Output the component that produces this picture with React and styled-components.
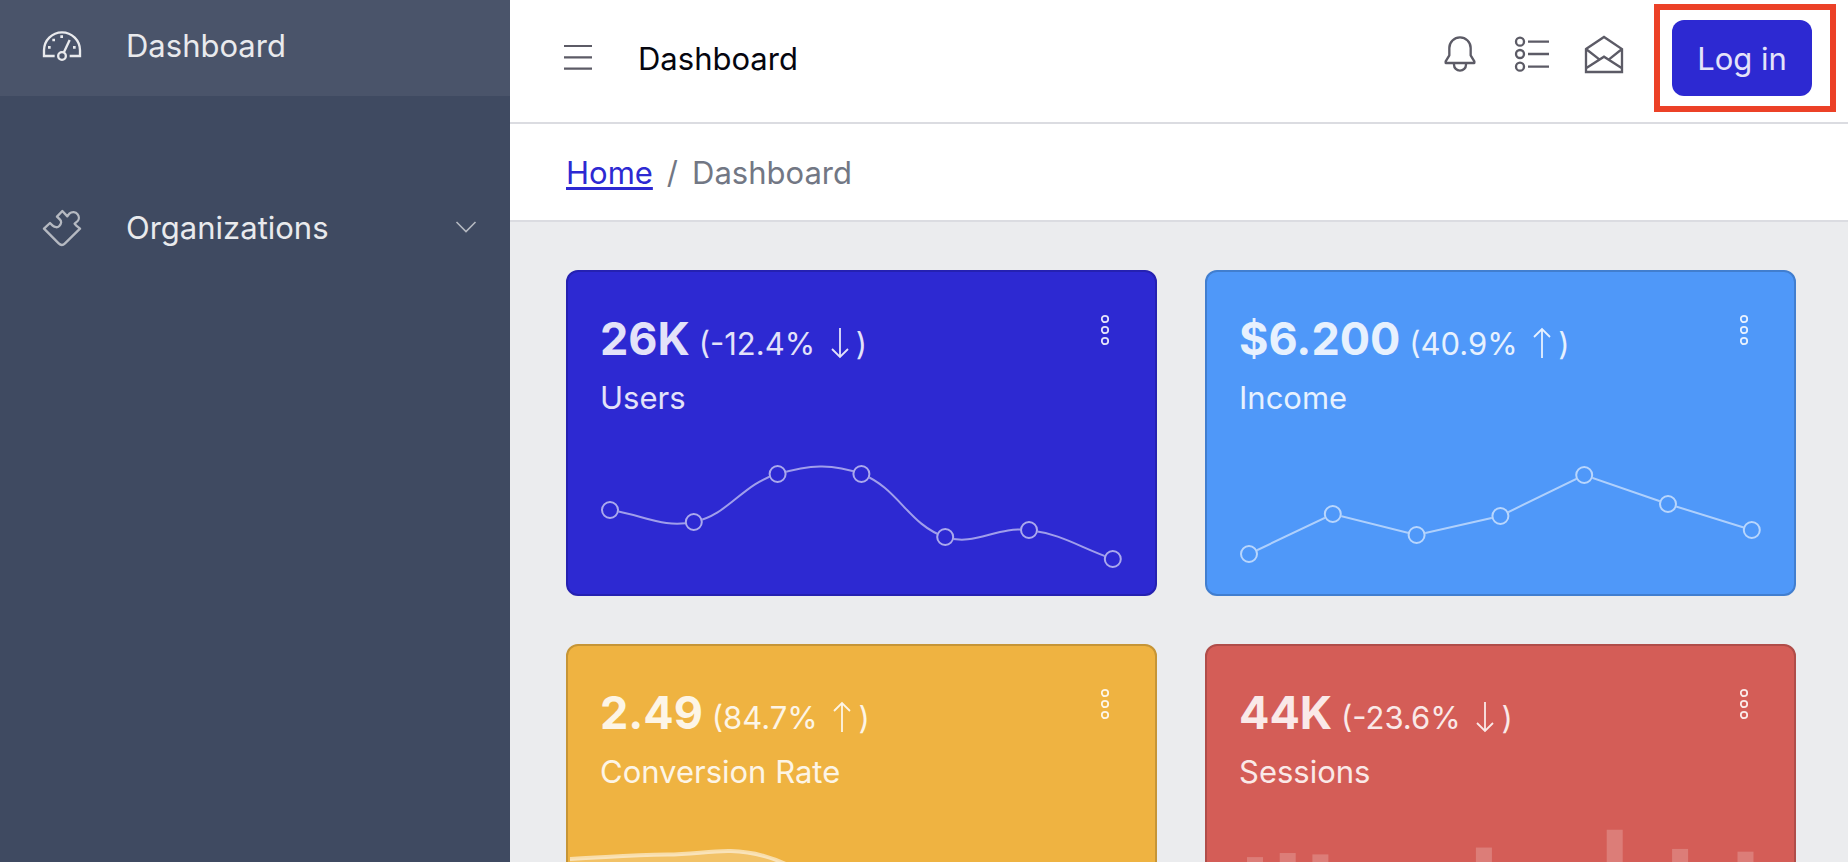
import React from "react";
import styled, { createGlobalStyle } from "styled-components";

const GlobalStyle = createGlobalStyle`
  *, *::before, *::after { box-sizing: border-box; }
  body {
    margin: 0;
    background: #ebecee;
    color: #080a0c;
    font-family: Inter, "Liberation Sans", sans-serif;
    font-size: 31px;
    line-height: 48px;
  }
  button { font: inherit; color: inherit; border: 0; padding: 0; background: none; cursor: pointer; }
  svg { display: block; }
`;

const Shell = styled.div`
  display: flex;
  height: 100vh;
  overflow: hidden;
`;

const Sidebar = styled.nav`
  flex: 0 0 510px;
  background: #3f4a61;
  display: flex;
  flex-direction: column;
  gap: 84px;
`;

const SidebarLink = styled.a`
  display: flex;
  align-items: center;
  gap: 44px;
  padding: ${(p) => (p.$active ? "22px 32px 26px 42px" : "24px 24px 24px 42px")};
  background: ${(p) => (p.$active ? "#4a546a" : "transparent")};
  color: #e9eaed;
  text-decoration: none;
`;

const SidebarLabel = styled.span`
  flex: 1;
`;

const Page = styled.div`
  flex: 1;
  min-width: 0;
  overflow-y: auto;
  scrollbar-width: none;
`;

const Header = styled.header`
  display: flex;
  align-items: center;
  padding: 4px 12px 10px 46px;
  background: #fff;
  border-bottom: 2px solid #dbdce1;
`;

const IconButton = styled.button`
  width: 40px;
  height: 40px;
  color: #5c5b66;
`;

const MenuButton = styled(IconButton)`
  width: 44px;
  display: grid;
  place-items: center;
`;

const HeaderTitle = styled.a`
  margin-left: 38px;
  padding-top: 2px;
  color: #05060f;
  text-decoration: none;
`;

const HeaderTools = styled.div`
  display: flex;
  gap: 32px;
  margin: 0 30px 8px auto;
`;

const Highlight = styled.div`
  border: 6px solid #ec4127;
  padding: 10px 18px 10px 12px;
`;

const LoginButton = styled.button`
  display: block;
  width: 140px;
  height: 76px;
  padding-top: 2px;
  border-radius: 12px;
  background: #2d29d2;
  color: #e4e3f9;
`;

const Breadcrumb = styled.nav`
  display: flex;
  gap: 14px;
  padding: 25px 56px 23px;
  background: #fff;
  color: #727784;
  border-bottom: 2px solid #dbdce1;

  a {
    color: #2d29d2;
    text-decoration-thickness: 3px;
    text-underline-offset: 3px;
  }
`;

const Cards = styled.main`
  display: grid;
  grid-template-columns: 1fr 1fr;
  gap: 48px;
  padding: 48px 52px 48px 56px;
`;

const tones = {
  primary: { bg: "#2d29d2", edge: "#2521b1", text: "#e3e2f9" },
  info: { bg: "#4f98f9", edge: "#417ecf", text: "#e7f1fe" },
  warning: { bg: "#efb341", edge: "#c69536", text: "#fdf5e6" },
  danger: { bg: "#d45d57", edge: "#b04d49", text: "#fae9e8" },
};

const Card = styled.article`
  background: ${(p) => tones[p.$tone].bg};
  border: 2px solid ${(p) => tones[p.$tone].edge};
  border-radius: 12px;
  color: ${(p) => tones[p.$tone].text};
  overflow: hidden;
`;

const CardBody = styled.div`
  display: flex;
  justify-content: space-between;
  align-items: flex-start;
  padding: 32px 32px 0;
`;

const Figure = styled.div`
  height: 70px;
  line-height: 70px;
  white-space: nowrap;

  svg { display: inline-block; vertical-align: -4px; }
`;

const Amount = styled.strong`
  font-size: 45px;
  font-weight: 700;
`;

const OptionsButton = styled.button`
  width: 36px;
  height: 52px;
  display: grid;
  place-items: center;
`;

const ChartArea = styled.div`
  padding: 0 ${(p) => (p.$bleed ? 0 : 32)}px;

  svg { width: 100%; height: auto; }
`;

const stroked = { fill: "none", stroke: "currentColor", strokeWidth: 7 };

const Speedometer = () => (
  <svg width="40" height="40" viewBox="126 76 120 120" aria-hidden="true">
    <g {...stroked}>
      <path d="M164 166H132V149a54 54 0 0 1 108 0V166H209" />
      <circle cx="186" cy="166" r="11.5" />
      <path d="M191 156L209 118" />
    </g>
    <path
      fill="currentColor"
      d="M181 104h8v8h-8zM157 114h8v8h-8zM144 136h8v8h-8zM219 136h8v8h-8z"
    />
  </svg>
);

const Puzzle = () => (
  <svg width="40" height="40" viewBox="126 624 120 120" color="#b5b9c1" aria-hidden="true">
    <path
      {...stroked}
      strokeLinejoin="round"
      d="M187 633L202 649L208 641C216 634 227 635 233 643C238 650 237 659 233 663L224 671L228 676L240 686L195 730C189 736 182 736 176 730L132 686L150 669L158 677C164 683 173 683 178 678C184 672 185 664 180 659L171 650Z"
    />
  </svg>
);

const Chevron = () => (
  <svg width="40" height="40" viewBox="0 0 40 40" color="#b5b9c1" aria-hidden="true">
    <path {...stroked} strokeWidth="1.6" d="M10.5 14L20 23.500L29.500 14" />
  </svg>
);

const Menu = () => (
  <svg width="28" height="28" viewBox="0 0 28 28" aria-hidden="true">
    <path {...stroked} strokeWidth="2.2" d="M0 2h28M0 13.300h28M0 24.600h28" />
  </svg>
);

const Bell = () => (
  <svg width="40" height="40" viewBox="120 101 120 120" aria-hidden="true">
    <path
      {...stroked}
      strokeLinejoin="round"
      d="M148 165V143a32 32 0 0 1 64 0V165L223 183V188H137V183ZM162 190v3a18 18 0 0 0 36 0v-3"
    />
  </svg>
);

const List = () => (
  <svg width="40" height="40" viewBox="336 101 120 120" aria-hidden="true">
    <g {...stroked}>
      <circle cx="360" cy="124" r="12" />
      <circle cx="360" cy="161" r="12" />
      <circle cx="360" cy="199" r="12" />
      <path d="M384 124h63M384 161h63M384 199h63" />
    </g>
  </svg>
);

const Envelope = () => (
  <svg width="40" height="40" viewBox="552 101 120 120" aria-hidden="true">
    <path
      {...stroked}
      d="M558 146L612 110L666 146V215H558ZM558 146L598 177M666 146L627 177M558 204L612 169L666 204"
    />
  </svg>
);

const Arrow = ({ up }) => (
  <svg width="32" height="32" viewBox="0 0 32 32" role="img" aria-label={up ? "up" : "down"}>
    <path
      {...stroked}
      strokeWidth="1.8"
      d={up ? "M16 31V2M8 10L16 2L24 10" : "M16 1V30M8 22L16 30L24 22"}
    />
  </svg>
);

const Options = () => (
  <svg width="12" height="32" viewBox="0 0 12 32" aria-hidden="true">
    <g {...stroked} strokeWidth="1.8">
      <circle cx="6" cy="5" r="3.200" />
      <circle cx="6" cy="16" r="3.200" />
      <circle cx="6" cy="27" r="3.200" />
    </g>
  </svg>
);

/* Smooth curve through the points; tension 0 gives straight segments. */
function spline(points, tension) {
  const handles = points.map((cur, i) => {
    const prev = points[i - 1] || cur;
    const next = points[i + 1] || cur;
    const before = Math.hypot(cur[0] - prev[0], cur[1] - prev[1]);
    const after = Math.hypot(next[0] - cur[0], next[1] - cur[1]);
    const a = (tension * before) / (before + after);
    const b = (tension * after) / (before + after);
    const dx = next[0] - prev[0];
    const dy = next[1] - prev[1];
    return { in: [cur[0] - a * dx, cur[1] - a * dy], out: [cur[0] + b * dx, cur[1] + b * dy] };
  });
  return points
    .map((p, i) => (i === 0 ? `M${p}` : `C${handles[i - 1].out} ${handles[i].in} ${p}`))
    .join("");
}

const LineChart = ({ values, tension, fill }) => {
  const points = values.map((y, i) => [10 + i * 83.8, y]);
  return (
    <svg viewBox="0 0 523 172" aria-hidden="true">
      <g fill="none" stroke="#fff" strokeOpacity="0.55" strokeWidth="2">
        <path d={spline(points, tension)} />
      </g>
      {points.map(([x, y]) => (
        <g key={x}>
          <circle cx={x} cy={y} r="9" fill={fill} />
          <circle cx={x} cy={y} r="8" fill="none" stroke="#fff" strokeOpacity="0.6" strokeWidth="2" />
        </g>
      ))}
    </svg>
  );
};

const AreaChart = ({ values }) => {
  const points = values.map((v, i) => [2 + i * 97.2, 58.6 + (81 - v) * 1.47]);
  const line = spline(points, 0.4);
  return (
    <svg viewBox="0 0 587 172" aria-hidden="true">
      <path d={`${line}V172H2Z`} fill="#fff" fillOpacity="0.2" />
      <path d={line} fill="none" stroke="#fff" strokeOpacity="0.55" strokeWidth="4" />
    </svg>
  );
};

const BarChart = ({ values }) => (
  <svg viewBox="0 0 523 172" aria-hidden="true">
    {values.map((v, i) => (
      <rect
        key={i}
        x={8 + i * 32.7}
        y={168 - v * 1.37}
        width="16"
        height={v * 1.37}
        fill="#fff"
        fillOpacity="0.2"
      />
    ))}
  </svg>
);

const stats = [
  {
    tone: "primary", amount: "26K", change: "-12.4%", up: false, label: "Users",
    chart: <LineChart values={[88, 100, 52, 52, 115, 108, 137]} tension={0.4} fill={tones.primary.bg} />,
  },
  {
    tone: "info", amount: "$6.200", change: "40.9%", up: true, label: "Income",
    chart: <LineChart values={[132, 92, 113, 94, 53, 82, 108]} tension={0} fill={tones.info.bg} />,
  },
  {
    tone: "warning", amount: "2.49", change: "84.7%", up: true, label: "Conversion Rate", bleed: true,
    chart: <AreaChart values={[78, 81, 80, 45, 34, 12, 40]} />,
  },
  {
    tone: "danger", amount: "44K", change: "-23.6%", up: false, label: "Sessions",
    chart: <BarChart values={[78, 81, 80, 45, 34, 12, 40, 85, 65, 23, 12, 98, 34, 84, 67, 82]} />,
  },
];

const StatCard = ({ tone, amount, change, up, label, bleed, chart }) => (
  <Card $tone={tone}>
    <CardBody>
      <div>
        <Figure>
          <Amount>{amount}</Amount> ({change} <Arrow up={up} />)
        </Figure>
        <div>{label}</div>
      </div>
      <OptionsButton aria-label={`${label} options`}>
        <Options />
      </OptionsButton>
    </CardBody>
    <ChartArea $bleed={bleed}>{chart}</ChartArea>
  </Card>
);

export default function App() {
  return (
    <>
      <GlobalStyle />
      <Shell>
        <Sidebar>
          <SidebarLink href="#dashboard" $active>
            <Speedometer />
            <SidebarLabel>Dashboard</SidebarLabel>
          </SidebarLink>
          <SidebarLink href="#organizations">
            <Puzzle />
            <SidebarLabel>Organizations</SidebarLabel>
            <Chevron />
          </SidebarLink>
        </Sidebar>
        <Page>
          <Header>
            <MenuButton aria-label="Toggle sidebar"><Menu /></MenuButton>
            <HeaderTitle href="#dashboard">Dashboard</HeaderTitle>
            <HeaderTools>
              <IconButton aria-label="Notifications"><Bell /></IconButton>
              <IconButton aria-label="Tasks"><List /></IconButton>
              <IconButton aria-label="Messages"><Envelope /></IconButton>
            </HeaderTools>
            <Highlight>
              <LoginButton>Log in</LoginButton>
            </Highlight>
          </Header>
          <Breadcrumb aria-label="Breadcrumb">
            <a href="#home">Home</a>
            <span>/</span>
            <span>Dashboard</span>
          </Breadcrumb>
          <Cards>
            {stats.map((s) => <StatCard key={s.tone} {...s} />)}
          </Cards>
        </Page>
      </Shell>
    </>
  );
}
